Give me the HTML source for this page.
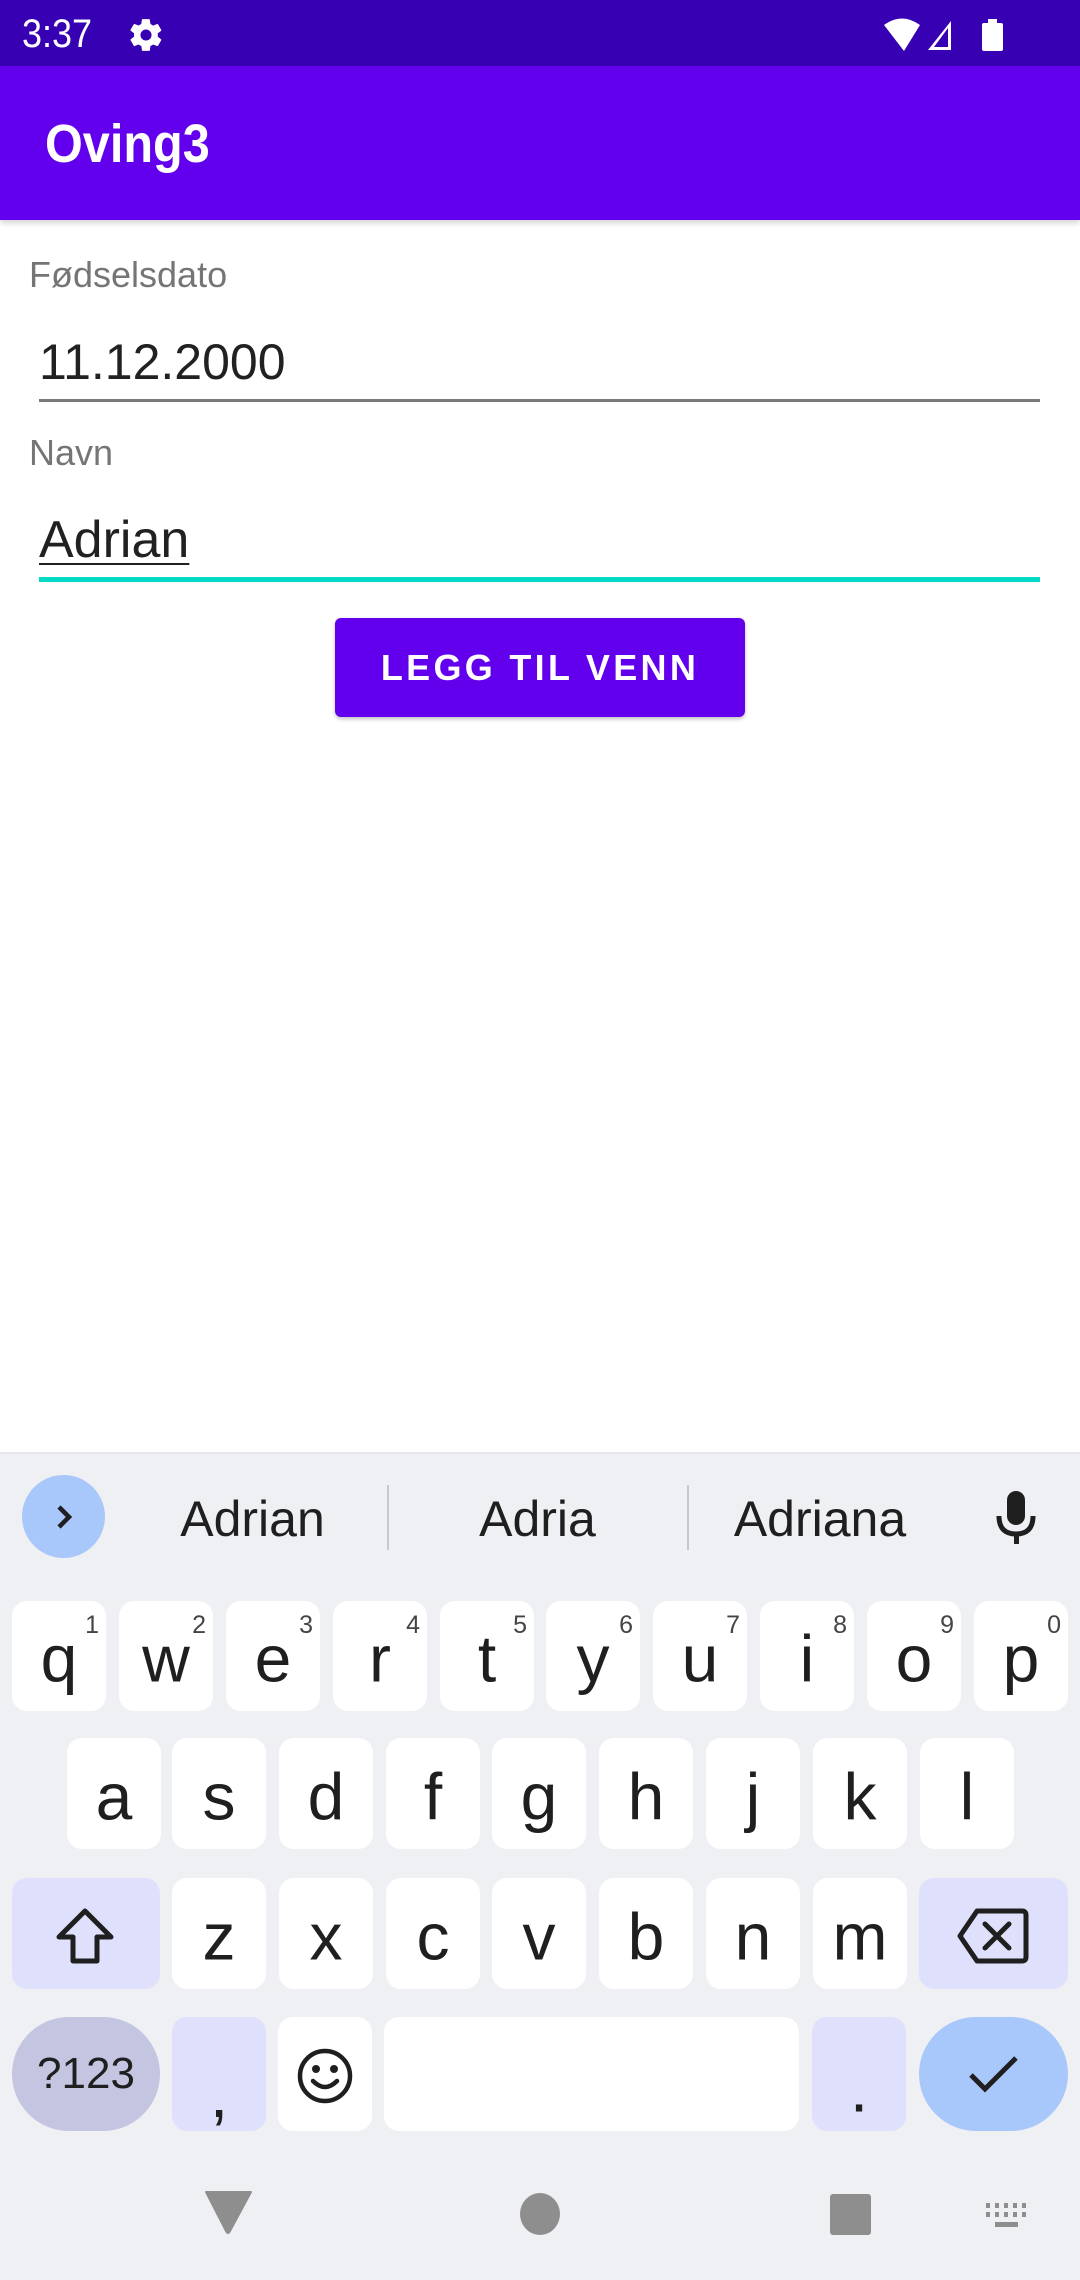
<!DOCTYPE html>
<html><head><meta charset="utf-8"><style>
*{margin:0;padding:0;box-sizing:border-box}
body{width:1080px;height:2280px;position:relative;background:#fff;font-family:"Liberation Sans",Roboto,sans-serif;overflow:hidden}
.a{position:absolute}
.k{position:absolute;background:#fff;border-radius:15px;width:94px;color:#1f1f1f;font-size:66px;text-align:center}
.k span{position:absolute;left:0;right:0;top:50%;transform:translateY(-46%);line-height:1}
.k i{position:absolute;right:7px;top:10px;font-style:normal;font-size:25px;color:#444}
.r1{top:1601px;height:110px}.r2{top:1738px;height:111px}.r3{top:1878px;height:111px}.r4{top:2017px;height:114px}
</style></head><body>
<div class="a" style="left:0;top:0;width:1080px;height:66px;background:#3700B3"></div>
<div class="a" style="left:22px;top:12px;color:#fff;font-size:40px;transform:scaleX(.9);transform-origin:left">3:37</div>
<svg class="a" style="left:127px;top:16px" width="38" height="38" viewBox="0 0 24 24"><path fill="#fff" d="M19.4 13c.04-.3.06-.6.06-1s-.02-.7-.06-1l2.1-1.6c.2-.15.25-.4.12-.64l-2-3.46c-.12-.22-.38-.3-.6-.22l-2.5 1c-.52-.4-1.080-.73-1.7-.98L14.4 2.4c-.04-.24-.25-.4-.5-.4h-4c-.25 0-.46.16-.5.4l-.38 2.65c-.6.25-1.17.6-1.7.98l-2.48-1c-.23-.08-.48 0-.6.22l-2 3.46c-.13.22-.07.5.12.64L4.5 11c-.04.3-.07.66-.07 1s.03.7.07 1l-2.1 1.65c-.2.15-.25.42-.13.64l2 3.46c.12.22.38.3.6.22l2.5-1c.52.4 1.08.73 1.7.98l.37 2.65c.04.24.25.4.5.4h4c.25 0 .46-.17.5-.4l.37-2.65c.6-.25 1.17-.58 1.7-.98l2.48 1c.23.08.48 0 .6-.22l2-3.46c.12-.22.07-.5-.12-.64L19.4 13zM12 15.5c-1.93 0-3.5-1.570-3.5-3.5s1.57-3.5 3.5-3.5 3.5 1.57 3.5 3.5-1.57 3.5-3.5 3.5z"/></svg>
<svg class="a" style="left:880px;top:16px" width="130" height="38" viewBox="0 0 130 38"><path d="M4 9 Q22 -4 40 9 L24 35 Z" fill="#fff"/><path d="M48 34 L71 5 V34 Z M54 31 H68 V12 Z" fill="#fff" fill-rule="evenodd"/><rect x="102" y="7" width="21" height="28" rx="2" fill="#fff"/><rect x="108" y="3" width="9" height="5" fill="#fff"/></svg>
<div class="a" style="left:0;top:66px;width:1080px;height:154px;background:#6200EE;box-shadow:0 3px 6px rgba(0,0,0,.18)"></div>
<div class="a" style="left:45px;top:113px;color:#fff;font-size:54px;font-weight:600;transform:scaleX(.9);transform-origin:left">Oving3</div>
<div class="a" style="left:29px;top:254px;color:#757575;font-size:36px">Fødselsdato</div>
<div class="a" style="left:39px;top:333px;color:#212121;font-size:50px">11.12.2000</div>
<div class="a" style="left:39px;top:399px;width:1001px;height:3px;background:#7a7a7a"></div>
<div class="a" style="left:29px;top:432px;color:#757575;font-size:36px">Navn</div>
<div class="a" style="left:39px;top:510px;color:#212121;font-size:52px;text-decoration:underline;text-decoration-thickness:2px;text-underline-offset:6px">Adrian</div>
<div class="a" style="left:39px;top:577px;width:1001px;height:5px;background:#03DAC5"></div>
<div class="a" style="left:335px;top:618px;width:410px;height:99px;background:#6200EE;border-radius:6px;box-shadow:0 2px 4px rgba(0,0,0,.25);color:#fff;font-size:36px;font-weight:bold;letter-spacing:3.3px;text-align:center;line-height:99px">LEGG TIL VENN</div>
<div class="a" style="left:0;top:1452px;width:1080px;height:828px;background:#eff0f3;border-top:2px solid #e8e8ec"></div>
<div class="a" style="left:22px;top:1475px;width:83px;height:83px;border-radius:50%;background:#a8c7fa"></div>
<svg class="a" style="left:46px;top:1499px" width="36" height="36" viewBox="0 0 36 36"><path d="M13 8 L23 18 L13 28" stroke="#1f1f1f" stroke-width="4.5" fill="none"/></svg>
<div class="a" style="left:130px;top:1490px;width:245px;text-align:center;font-size:50px;color:#1f1f1f">Adrian</div>
<div class="a" style="left:387px;top:1485px;width:2px;height:65px;background:#c8c8cc"></div>
<div class="a" style="left:410px;top:1490px;width:255px;text-align:center;font-size:50px;color:#1f1f1f">Adria</div>
<div class="a" style="left:687px;top:1485px;width:2px;height:65px;background:#c8c8cc"></div>
<div class="a" style="left:700px;top:1490px;width:240px;text-align:center;font-size:50px;color:#1f1f1f">Adriana</div>
<svg class="a" style="left:995px;top:1488px" width="44" height="58" viewBox="0 0 44 58"><rect x="12" y="3" width="18" height="34" rx="9" fill="#1f1f1f"/><path d="M4 28 Q4 46 21 46 Q38 46 38 28" stroke="#1f1f1f" stroke-width="5" fill="none"/><rect x="19" y="45" width="5" height="11" fill="#1f1f1f"/></svg>

<div class="k r1" style="left:12px"><span>q</span><i>1</i></div>
<div class="k r1" style="left:119px"><span>w</span><i>2</i></div>
<div class="k r1" style="left:226px"><span>e</span><i>3</i></div>
<div class="k r1" style="left:333px"><span>r</span><i>4</i></div>
<div class="k r1" style="left:440px"><span>t</span><i>5</i></div>
<div class="k r1" style="left:546px"><span>y</span><i>6</i></div>
<div class="k r1" style="left:653px"><span>u</span><i>7</i></div>
<div class="k r1" style="left:760px"><span>i</span><i>8</i></div>
<div class="k r1" style="left:867px"><span>o</span><i>9</i></div>
<div class="k r1" style="left:974px"><span>p</span><i>0</i></div>

<div class="k r2" style="left:67px"><span>a</span></div>
<div class="k r2" style="left:172px"><span>s</span></div>
<div class="k r2" style="left:279px"><span>d</span></div>
<div class="k r2" style="left:386px"><span>f</span></div>
<div class="k r2" style="left:492px"><span>g</span></div>
<div class="k r2" style="left:599px"><span>h</span></div>
<div class="k r2" style="left:706px"><span>j</span></div>
<div class="k r2" style="left:813px"><span>k</span></div>
<div class="k r2" style="left:920px"><span>l</span></div>

<div class="k r3" style="left:12px;width:148px;background:#dfe0fc"></div>
<svg class="a" style="left:52px;top:1906px" width="66" height="60" viewBox="0 0 66 60"><path d="M33 5 L59 31 H45 V55 H21 V31 H7 Z" stroke="#1f1f1f" stroke-width="5" fill="none" stroke-linejoin="round"/></svg>
<div class="k r3" style="left:172px"><span>z</span></div>
<div class="k r3" style="left:279px"><span>x</span></div>
<div class="k r3" style="left:386px"><span>c</span></div>
<div class="k r3" style="left:492px"><span>v</span></div>
<div class="k r3" style="left:599px"><span>b</span></div>
<div class="k r3" style="left:706px"><span>n</span></div>
<div class="k r3" style="left:813px"><span>m</span></div>
<div class="k r3" style="left:919px;width:149px;background:#dfe0fc"></div>
<svg class="a" style="left:955px;top:1907px" width="76" height="58" viewBox="0 0 76 58"><path d="M22 4 H67 Q71 4 71 8 V50 Q71 54 67 54 H22 L5 29 Z" stroke="#1f1f1f" stroke-width="5" fill="none" stroke-linejoin="round"/><path d="M30 17 L54 41 M54 17 L30 41" stroke="#1f1f1f" stroke-width="5" stroke-linecap="round"/></svg>

<div class="k r4" style="left:12px;width:148px;background:#c3c5e1;border-radius:57px;font-size:44px"><span style="transform:translateY(-50%)">?123</span></div>
<div class="k r4" style="left:172px;background:#dfe0fc"><span style="transform:translateY(-20%)">,</span></div>
<div class="k r4" style="left:278px"></div>
<svg class="a" style="left:296px;top:2047px" width="58" height="58" viewBox="0 0 58 58"><circle cx="29" cy="29" r="25" stroke="#1f1f1f" stroke-width="4.5" fill="none"/><circle cx="20" cy="22" r="4" fill="#1f1f1f"/><circle cx="38" cy="22" r="4" fill="#1f1f1f"/><path d="M17 34 Q29 46 41 34" stroke="#1f1f1f" stroke-width="4.5" fill="none" stroke-linecap="round"/></svg>
<div class="k r4" style="left:384px;width:415px"></div>
<div class="k r4" style="left:812px;background:#dfe0fc"><span style="transform:translateY(-28%)">.</span></div>
<div class="k r4" style="left:919px;width:149px;background:#a8c7fa;border-radius:57px"></div>
<svg class="a" style="left:966px;top:2050px" width="56" height="48" viewBox="0 0 56 48"><path d="M5 25 L19 39 L50 8" stroke="#1f1f1f" stroke-width="5" fill="none"/></svg>

<svg class="a" style="left:200px;top:2185px" width="860" height="60" viewBox="200 2185 860 60"><path d="M206 2192 H251 L230 2231 Q228 2235 226 2231 Z" fill="#8e8e8e" stroke="#8e8e8e" stroke-width="2" stroke-linejoin="round"/><ellipse cx="540" cy="2214" rx="20" ry="21" fill="#8e8e8e"/><rect x="830" y="2194" width="41" height="41" rx="3" fill="#8e8e8e"/><g fill="#8e8e8e"><rect x="986" y="2203" width="4" height="5"/><rect x="995" y="2203" width="4" height="5"/><rect x="1004" y="2203" width="4" height="5"/><rect x="1013" y="2203" width="4" height="5"/><rect x="1022" y="2203" width="4" height="5"/><rect x="986" y="2212" width="4" height="5"/><rect x="995" y="2212" width="4" height="5"/><rect x="1004" y="2212" width="4" height="5"/><rect x="1013" y="2212" width="4" height="5"/><rect x="1022" y="2212" width="4" height="5"/><rect x="995" y="2222" width="23" height="5"/></g></svg>
</body></html>
